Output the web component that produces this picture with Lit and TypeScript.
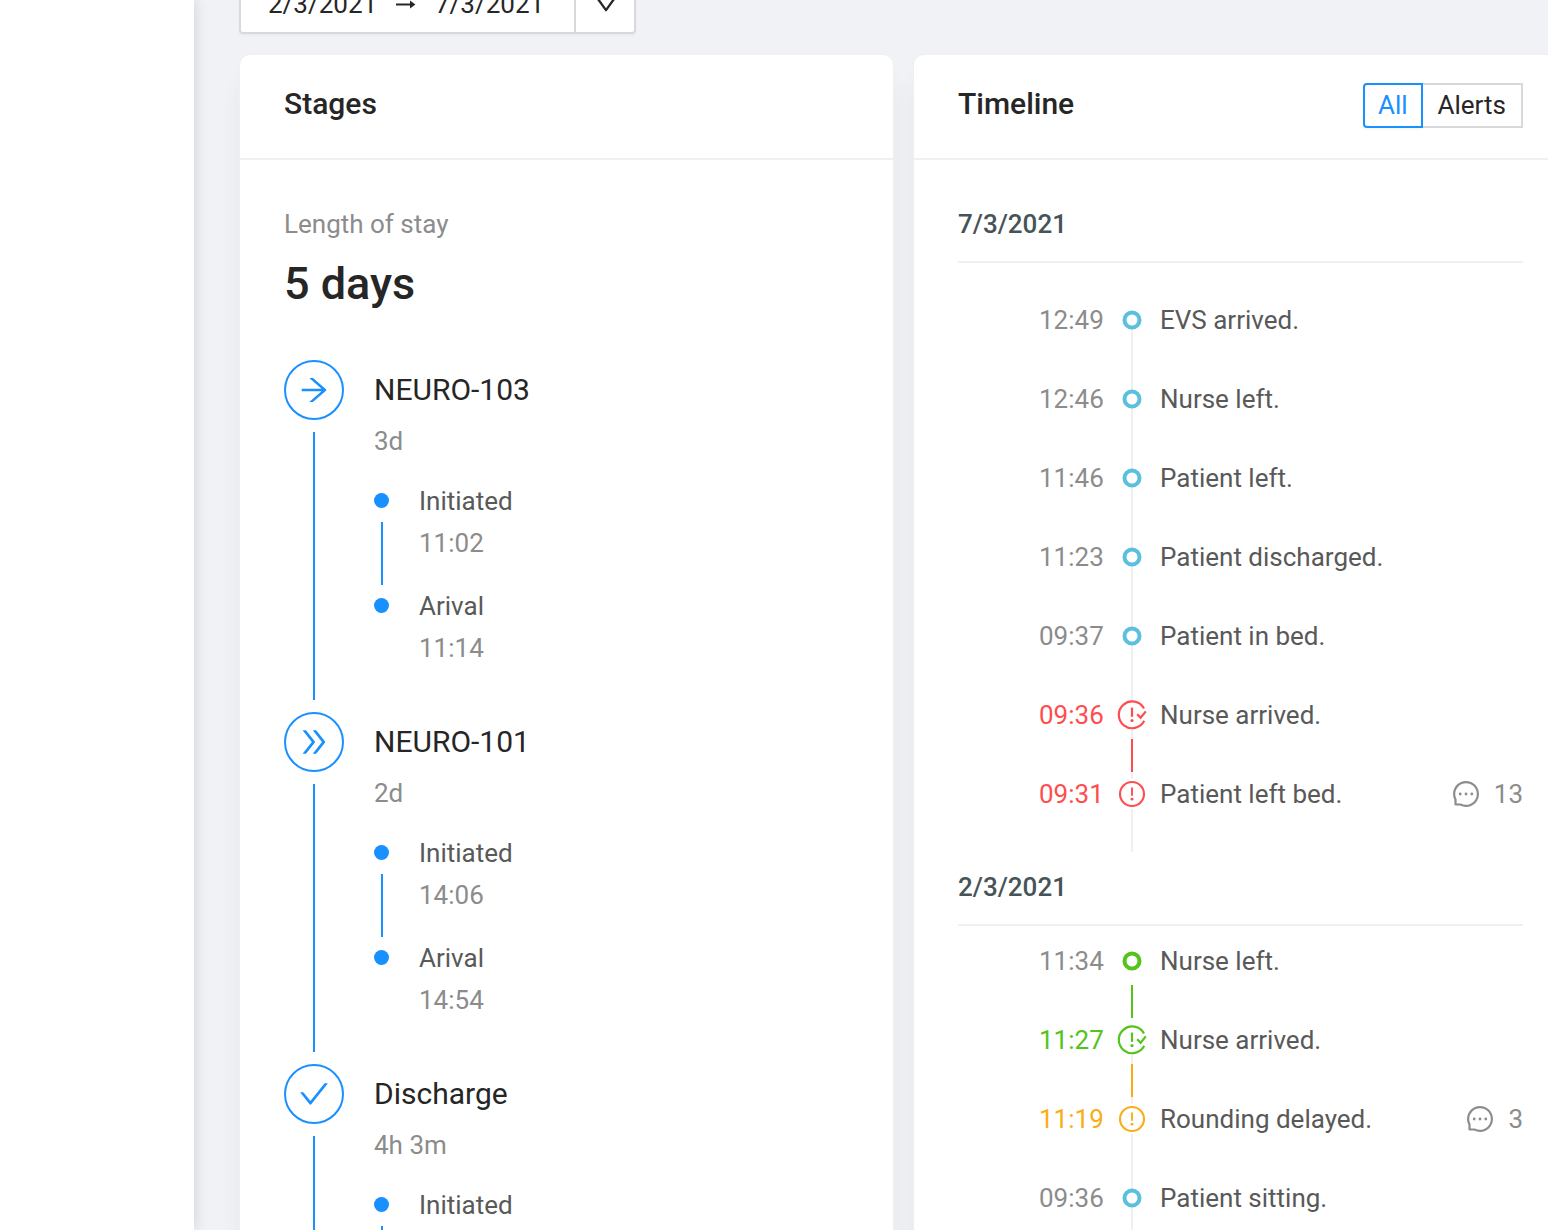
import { LitElement, html, css, svg, nothing } from "lit";
import { customElement, state } from "lit/decorators.js";
import { classMap } from "lit/directives/class-map.js";

type Tone = "info" | "danger" | "success" | "warning";
type Marker = "ring" | "alert" | "resolved";
type Filter = "All" | "Alerts";

interface Step {
  label: string;
  time: string;
}

interface Stage {
  icon: keyof typeof STAGE_ICONS;
  name: string;
  duration: string;
  steps: Step[];
}

interface TimelineEvent {
  time: string;
  text: string;
  marker: Marker;
  tone: Tone;
  link?: Tone;
  rail?: "start" | "none";
  comments?: number;
}

interface Day {
  date: string;
  roomy: boolean;
  events: TimelineEvent[];
}

const STAGE_ICONS = {
  arrow:
    "M869 487.8L491.2 159.9c-2.9-2.5-6.6-3.9-10.5-3.9h-88.5c-7.4 0-10.8 9.2-5.2 14l350.2 304H152c-4.4 0-8 3.6-8 8v60c0 4.4 3.6 8 8 8h585.1L386.9 854c-5.6 4.9-2.2 14 5.2 14h91.5c1.9 0 3.8-.7 5.2-2L869 536.2a32.07 32.07 0 000-48.4z",
  forward:
    "M533.2 492.3L277.9 166.1c-3-3.9-7.7-6.1-12.6-6.1H188c-6.7 0-10.4 7.7-6.3 12.9L447.1 512 181.7 851.1A7.98 7.98 0 00188 864h77.3c4.9 0 9.6-2.3 12.6-6.1l255.3-326.1c9.1-11.7 9.1-27.9 0-39.5zm304 0L581.9 166.1c-3-3.9-7.7-6.1-12.6-6.1H492c-6.7 0-10.4 7.7-6.3 12.9L751.1 512 485.7 851.1A7.98 7.98 0 00492 864h77.3c4.9 0 9.6-2.3 12.6-6.1l255.3-326.1c9.1-11.7 9.1-27.9 0-39.5z",
  check:
    "M912 190h-69.9c-9.8 0-19.1 4.5-25.1 12.2L404.7 724.5 207 474a32 32 0 00-25.1-12.2H112c-6.7 0-10.4 7.7-6.3 12.9l273.9 347c12.8 16.2 37.4 16.2 50.3 0l488.4-618.9c4.1-5.1.4-12.8-6.3-12.8z",
};

const DOWN =
  "M884 256h-75c-5.1 0-9.9 2.5-12.9 6.6L512 654.2 227.9 262.6c-3-4.1-7.8-6.6-12.9-6.6h-75c-6.5 0-10.3 7.4-6.5 12.7l352.6 486.1c12.8 17.6 39 17.6 51.7 0l352.6-486.1c3.9-5.3.1-12.7-6.4-12.7z";

const MESSAGE =
  "M464 512a48 48 0 1096 0 48 48 0 10-96 0zm200 0a48 48 0 1096 0 48 48 0 10-96 0zm-400 0a48 48 0 1096 0 48 48 0 10-96 0zm661.2-173.6c-22.6-53.7-55-101.9-96.3-143.3a444.35 444.35 0 00-143.3-96.3C630.6 75.7 572.2 64 512 64h-2c-60.6.3-119.3 12.3-174.5 35.9a445.35 445.35 0 00-142 96.5c-40.9 41.3-73 89.3-95.2 142.8-23 55.4-34.6 114.3-34.3 174.9A449.4 449.4 0 00112 714v152a46 46 0 0046 46h152.1A449.4 449.4 0 00510 960h2.1c59.9 0 118-11.6 172.7-34.3a444.48 444.48 0 00142.8-95.2c41.3-40.9 73.8-88.7 96.5-142 23.6-55.2 35.6-113.9 35.9-174.5.3-60.9-11.5-120-34.8-175.6zm-151.1 438C704 845.8 611 884 512 884h-1.7c-60.3-.3-120.2-15.3-173.1-43.5l-8.4-4.5H188V695.2l-4.5-8.4C155.3 633.9 140.3 574 140 513.7c-.4-99.7 37.7-193.3 107.6-263.8 69.8-70.5 163.1-109.5 262.8-109.9h1.7c50 0 98.5 9.7 144.2 28.9 44.6 18.7 84.6 45.6 119 80 34.3 34.3 61.3 74.4 80 119 19.4 46.2 29.1 95.2 28.9 145.8-.6 99.6-39.7 192.9-110.1 262.7z";

const STAGES: Stage[] = [
  {
    icon: "arrow",
    name: "NEURO-103",
    duration: "3d",
    steps: [
      { label: "Initiated", time: "11:02" },
      { label: "Arival", time: "11:14" },
    ],
  },
  {
    icon: "forward",
    name: "NEURO-101",
    duration: "2d",
    steps: [
      { label: "Initiated", time: "14:06" },
      { label: "Arival", time: "14:54" },
    ],
  },
  {
    icon: "check",
    name: "Discharge",
    duration: "4h 3m",
    steps: [
      { label: "Initiated", time: "" },
      { label: "", time: "" },
    ],
  },
];

const DAYS: Day[] = [
  {
    date: "7/3/2021",
    roomy: true,
    events: [
      { time: "12:49", text: "EVS arrived.", marker: "ring", tone: "info", rail: "start" },
      { time: "12:46", text: "Nurse left.", marker: "ring", tone: "info" },
      { time: "11:46", text: "Patient left.", marker: "ring", tone: "info" },
      { time: "11:23", text: "Patient discharged.", marker: "ring", tone: "info" },
      { time: "09:37", text: "Patient in bed.", marker: "ring", tone: "info" },
      { time: "09:36", text: "Nurse arrived.", marker: "resolved", tone: "danger", link: "danger" },
      { time: "09:31", text: "Patient left bed.", marker: "alert", tone: "danger", comments: 13 },
    ],
  },
  {
    date: "2/3/2021",
    roomy: false,
    events: [
      { time: "11:34", text: "Nurse left.", marker: "ring", tone: "success", link: "success", rail: "none" },
      { time: "11:27", text: "Nurse arrived.", marker: "resolved", tone: "success", link: "warning", rail: "start" },
      { time: "11:19", text: "Rounding delayed.", marker: "alert", tone: "warning", comments: 3 },
      { time: "09:36", text: "Patient sitting.", marker: "ring", tone: "info" },
    ],
  },
];

const base = css`
  *,
  *::before,
  *::after {
    box-sizing: border-box;
  }
  h2,
  h3,
  p,
  ol {
    margin: 0;
    padding: 0;
    list-style: none;
    font-weight: inherit;
    font-size: inherit;
  }
  svg {
    display: block;
    flex: none;
  }
`;

const glyph = (d: string, size: number) =>
  html`<svg viewBox="64 64 896 896" width=${size} height=${size} fill="currentColor" aria-hidden="true">
    <path d=${d}></path>
  </svg>`;

@customElement("stage-list")
export class StageList extends LitElement {
  static styles = [
    base,
    css`
      :host {
        display: block;
      }
      .caption {
        color: #8c8c8c;
      }
      .total {
        margin: 9px 0 46px;
        font-size: 45px;
        font-weight: 500;
        line-height: 60px;
      }
      .stage {
        display: grid;
        grid-template-columns: 60px 1fr;
        column-gap: 30px;
      }
      .rail,
      .step-rail {
        display: flex;
        flex-direction: column;
        align-items: center;
        color: #1890ff;
      }
      .badge {
        display: grid;
        place-items: center;
        width: 60px;
        height: 60px;
        border: 2px solid currentColor;
        border-radius: 50%;
      }
      .line {
        flex: 1;
        width: 2px;
        margin: 12px 0;
        background: currentColor;
      }
      .name {
        font-size: 30px;
        line-height: 60px;
      }
      .muted {
        min-height: 42px;
        color: #8c8c8c;
      }
      .steps {
        padding: 18px 0 22px;
      }
      .step {
        display: grid;
        grid-template-columns: 15px 1fr;
        column-gap: 30px;
        color: #595959;
      }
      .step-text {
        padding-bottom: 21px;
      }
      .step-label {
        min-height: 42px;
      }
      .dot {
        width: 15px;
        height: 15px;
        margin-top: 13px;
        border-radius: 50%;
        background: currentColor;
      }
      .step-line {
        flex: 1;
        width: 2px;
        margin-top: 14px;
        background: currentColor;
      }
      .step:last-child .step-line {
        display: none;
      }
    `,
  ];

  render() {
    return html`
      <p class="caption">Length of stay</p>
      <p class="total">5 days</p>
      <ol>
        ${STAGES.map(
          (s) => html`<li class="stage">
            <div class="rail">
              <div class="badge">${glyph(STAGE_ICONS[s.icon], 30)}</div>
              <div class="line"></div>
            </div>
            <div>
              <h3 class="name">${s.name}</h3>
              <p class="muted">${s.duration}</p>
              <ol class="steps">
                ${s.steps.map(
                  (step) => html`<li class="step">
                    <div class="step-rail">
                      <div class="dot"></div>
                      <div class="step-line"></div>
                    </div>
                    <div class="step-text">
                      <p class="step-label">${step.label}</p>
                      <p class="muted">${step.time}</p>
                    </div>
                  </li>`,
                )}
              </ol>
            </div>
          </li>`,
        )}
      </ol>
    `;
  }
}

@customElement("event-timeline")
export class EventTimeline extends LitElement {
  static properties = { filter: {} };
  declare filter: Filter;

  static styles = [
    base,
    css`
      :host {
        display: block;
      }
      .date {
        padding-bottom: 16px;
        border-bottom: 2px solid #f0f0f0;
        color: #475457;
        font-weight: 500;
      }
      .events {
        padding: 14px 0;
      }
      .events.roomy {
        padding-top: 36px;
      }
      .event {
        display: grid;
        grid-template-columns: 65px 56px 1fr auto;
        min-height: 79px;
        padding-left: 81px;
        color: #595959;
      }
      .time {
        color: #8c8c8c;
      }
      .rail {
        display: flex;
        flex-direction: column;
        align-items: center;
        background: linear-gradient(#f0f0f0, #f0f0f0) center top / 2px 100% no-repeat;
      }
      .rail.start {
        background-position: center 21px;
      }
      .rail.none {
        background: none;
      }
      .marker {
        margin: 6px 0;
      }
      .marker.solid {
        background: #ffffff;
      }
      .link {
        width: 2px;
        height: 33px;
        margin-top: 3px;
        background: currentColor;
      }
      .info {
        color: #5bc0de;
      }
      .danger {
        color: #ff4d4f;
      }
      .success {
        color: #52c41a;
      }
      .warning {
        color: #faad14;
      }
      .comments {
        display: flex;
        align-items: center;
        gap: 15px;
        height: 42px;
        color: #8c8c8c;
      }
    `,
  ];

  private marker(e: TimelineEvent) {
    const shape =
      e.marker === "ring"
        ? svg`<circle cx="15" cy="15" r="7.5" stroke-width="4" fill="#ffffff"></circle>`
        : e.marker === "alert"
          ? svg`<circle cx="15" cy="15" r="12" stroke-width="2.1"></circle>
              <path d="M15 8.6V16.8" stroke-width="1.9"></path>
              <circle cx="15" cy="20.2" r="1.4" fill="currentColor" stroke="none"></circle>`
          : svg`<path d="M27 8.4A13.4 13.4 0 1 0 27.2 20.8" stroke-width="2.2"></path>
              <path d="M15 7.6V16.8" stroke-width="2.2"></path>
              <circle cx="15" cy="20.6" r="1.6" fill="currentColor" stroke="none"></circle>
              <path d="M20.2 14.2L23.6 17.8L28.8 11.4" stroke-width="2.2"></path>`;
    return html`<svg
      class="marker ${e.tone} ${e.marker === "ring" ? "" : "solid"}"
      viewBox="0 0 30 30"
      width="30"
      height="30"
      fill="none"
      stroke="currentColor"
      aria-hidden="true"
    >
      ${shape}
    </svg>`;
  }

  private row(e: TimelineEvent) {
    const tone = e.marker === "ring" ? "" : e.tone;
    return html`<li class="event">
      <time class="time ${tone}">${e.time}</time>
      <div class="rail ${e.rail ?? ""}">
        ${this.marker(e)} ${e.link ? html`<div class="link ${e.link}"></div>` : nothing}
      </div>
      <p>${e.text}</p>
      ${e.comments ? html`<div class="comments">${glyph(MESSAGE, 26)}<span>${e.comments}</span></div>` : nothing}
    </li>`;
  }

  render() {
    const visible = (e: TimelineEvent) => this.filter !== "Alerts" || e.marker !== "ring";
    return html`${DAYS.map(
      (day) => html`<section>
        <h3 class="date">${day.date}</h3>
        <ol class=${classMap({ events: true, roomy: day.roomy })}>
          ${day.events.filter(visible).map((e) => this.row(e))}
        </ol>
      </section>`,
    )}`;
  }
}

@customElement("app-root")
export class AppRoot extends LitElement {
  @state() private filter: Filter = "All";

  static styles = [
    base,
    css`
      :host {
        display: flex;
        height: 100vh;
        overflow: hidden;
        background: #f0f2f5;
        color: #262626;
        font: 400 26px/42px Roboto, "Liberation Sans", sans-serif;
      }
      .sidebar {
        flex: none;
        width: 194px;
        background: #ffffff;
        box-shadow: 0 0 14px rgba(20, 24, 40, 0.15);
      }
      .content {
        flex: 1;
        min-width: 0;
        margin: -26px -19px 0 0;
        padding-left: 46px;
      }
      .range {
        display: flex;
        align-items: center;
        width: fit-content;
        height: 60px;
        margin-bottom: 21px;
        margin-left: -1px;
        border: 2px solid #d9d9d9;
        border-radius: 4px;
        background: #ffffff;
        box-shadow: 0 2px 2px rgba(0, 0, 0, 0.03);
      }
      input,
      button {
        margin: 0;
        padding: 0;
        border: 0;
        border-radius: 0;
        background: none;
        color: inherit;
        font: inherit;
      }
      .range input {
        width: 137px;
        padding-left: 27px;
      }
      .range .end {
        width: 139px;
        padding-left: 0;
      }
      .arrow {
        margin: 0 19px 0 18px;
      }
      .open {
        display: grid;
        place-items: center;
        width: 60px;
        height: 56px;
        padding-left: 2px;
        border-left: 2px solid #d9d9d9;
      }
      .cards {
        display: grid;
        grid-template-columns: 1fr 1fr;
        gap: 21px;
      }
      .card {
        border-radius: 10px;
        background: #ffffff;
        box-shadow: 0 0 1px 1px #f0f0f0, 0 26px 24px rgba(30, 40, 80, 0.05);
      }
      .head {
        display: flex;
        align-items: flex-start;
        justify-content: space-between;
        height: 105px;
        padding: 28px 44px 0;
        border-bottom: 2px solid #f0f0f0;
      }
      .title {
        font-size: 30px;
        font-weight: 500;
      }
      .body {
        padding: 43px 44px;
      }
      .switch {
        display: flex;
      }
      .switch button {
        height: 45px;
        padding: 0 15px;
        border: 2px solid #d9d9d9;
        line-height: 41px;
      }
      .switch button:first-child {
        padding: 0 13px;
        border-radius: 4px 0 0 4px;
      }
      .switch button + button {
        border-left-width: 0;
      }
      .switch .on {
        border-color: #1890ff;
        color: #1890ff;
        box-shadow: 0 2px 2px rgba(0, 0, 0, 0.03);
      }
      .switch button + .on {
        border-left-width: 2px;
      }
    `,
  ];

  render() {
    const filters: Filter[] = ["All", "Alerts"];
    return html`
      <aside class="sidebar"></aside>
      <main class="content">
        <div class="range">
          <input aria-label="Start date" value="2/3/2021" />
          <svg class="arrow" viewBox="0 0 20 12" width="20" height="12" fill="none" aria-hidden="true">
            <path d="M0 6.5H17" stroke="currentColor" stroke-width="2"></path>
            <path d="M14 2.5L19.4 6.5L14 10.5Z" fill="currentColor"></path>
          </svg>
          <input class="end" aria-label="End date" value="7/3/2021" />
          <button class="open" aria-label="Open calendar">${glyph(DOWN, 26)}</button>
        </div>
        <div class="cards">
          <section class="card">
            <header class="head"><h2 class="title">Stages</h2></header>
            <div class="body"><stage-list></stage-list></div>
          </section>
          <section class="card">
            <header class="head">
              <h2 class="title">Timeline</h2>
              <div class="switch" role="group">
                ${filters.map(
                  (f) => html`<button
                    class=${classMap({ on: this.filter === f })}
                    aria-pressed=${this.filter === f}
                    @click=${() => (this.filter = f)}
                  >
                    ${f}
                  </button>`,
                )}
              </div>
            </header>
            <div class="body"><event-timeline .filter=${this.filter}></event-timeline></div>
          </section>
        </div>
      </main>
    `;
  }
}
